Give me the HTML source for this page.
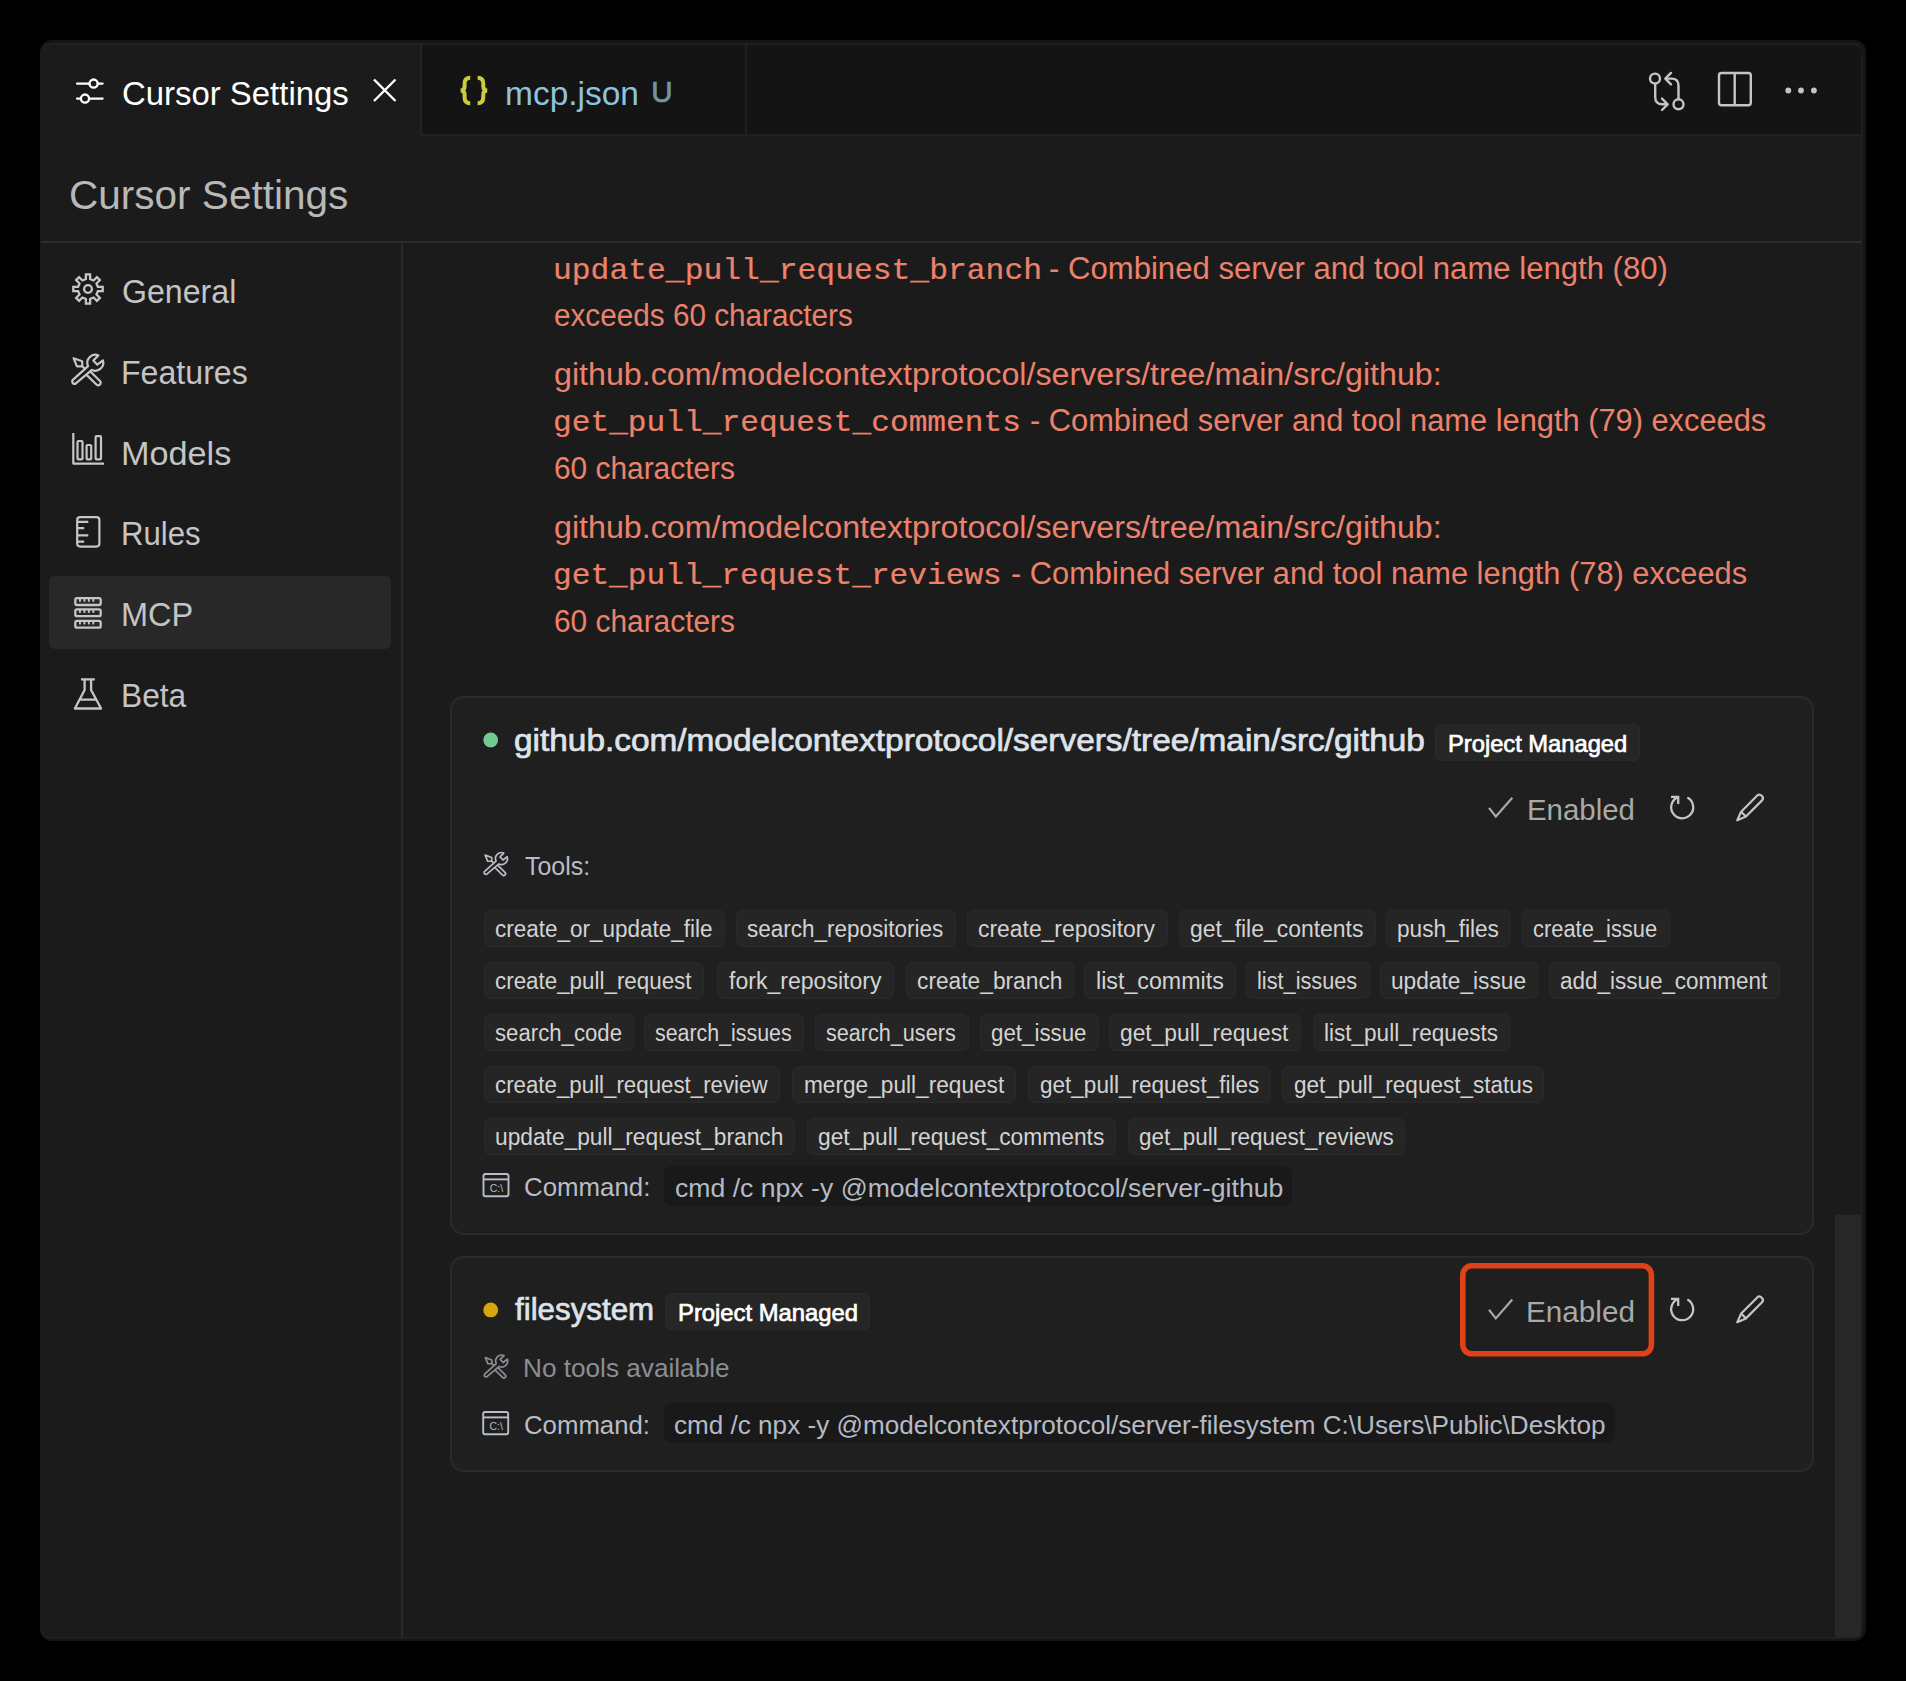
<!DOCTYPE html><html><head><meta charset="utf-8"><title>Cursor Settings</title><style>
html,body{margin:0;padding:0;background:#000;width:1906px;height:1681px;overflow:hidden}
.a{position:absolute;box-sizing:border-box}
.t{position:absolute;white-space:pre;line-height:0;transform-origin:0 0}
</style></head><body>
<div class="a" style="left:40px;top:40px;width:1826px;height:1601px;border-radius:12px;background:#151515;overflow:hidden">
<div class="a" style="left:0px;top:3px;width:1823px;height:1596px;background:#1b1b1b;border-radius:11px"></div>
<div class="a" style="left:380px;top:3px;width:1443px;height:91px;background:#141414;border-radius:0 11px 0 0"></div>
<div class="a" style="left:0px;top:3px;width:1823px;height:40px;border-top:2px solid #202020;border-radius:11px 11px 0 0"></div>
<div class="a" style="left:380px;top:5px;width:2px;height:91px;background:#232323"></div>
<div class="a" style="left:705px;top:5px;width:2px;height:89px;background:#202020"></div>
<div class="a" style="left:382px;top:94px;width:1441px;height:2px;background:#202020"></div>
<div class="a" style="left:1821px;top:14px;width:2px;height:1575px;background:#1d1d1d"></div>
<div class="a" style="left:0px;top:1559px;width:1823px;height:40px;border-bottom:2px solid #202020;border-radius:0 0 11px 11px"></div>
<div class="a" style="left:1px;top:201px;width:1821px;height:2px;background:#2b2b2b"></div>
<div class="a" style="left:361px;top:203px;width:2px;height:1394px;background:#292929"></div>
<div class="a" style="left:9px;top:536px;width:342px;height:73px;background:#282828;border-radius:6px"></div>
<div class="a" style="left:1795px;top:1175px;width:26px;height:422px;background:#272727"></div>
</div>
<div class="a" style="left:450px;top:696px;width:1364px;height:539px;background:#1f1f1f;border:2px solid #2a2a2a;border-radius:14px"></div>
<div class="a" style="left:450px;top:1256px;width:1364px;height:216px;background:#1f1f1f;border:2px solid #2a2a2a;border-radius:14px"></div>
<div class="a" style="left:1435px;top:724px;width:205px;height:37px;background:#262626;border:1px solid #2a2a2a;border-radius:6px"></div>
<div class="a" style="left:665px;top:1293px;width:205px;height:37px;background:#262626;border:1px solid #2a2a2a;border-radius:6px"></div>
<div class="a" style="left:483.5px;top:909.6px;width:241.0px;height:37px;background:#252525;border:1px solid #292929;border-radius:6px"></div>
<div class="a" style="left:735.5px;top:909.6px;width:220.0px;height:37px;background:#252525;border:1px solid #292929;border-radius:6px"></div>
<div class="a" style="left:967.0px;top:909.6px;width:201.0px;height:37px;background:#252525;border:1px solid #292929;border-radius:6px"></div>
<div class="a" style="left:1179.0px;top:909.6px;width:196.5px;height:37px;background:#252525;border:1px solid #292929;border-radius:6px"></div>
<div class="a" style="left:1386.0px;top:909.6px;width:124.8px;height:37px;background:#252525;border:1px solid #292929;border-radius:6px"></div>
<div class="a" style="left:1522.0px;top:909.6px;width:147.7px;height:37px;background:#252525;border:1px solid #292929;border-radius:6px"></div>
<div class="a" style="left:483.5px;top:961.6px;width:220.8px;height:37px;background:#252525;border:1px solid #292929;border-radius:6px"></div>
<div class="a" style="left:716.6px;top:961.6px;width:177.8px;height:37px;background:#252525;border:1px solid #292929;border-radius:6px"></div>
<div class="a" style="left:906.0px;top:961.6px;width:168.0px;height:37px;background:#252525;border:1px solid #292929;border-radius:6px"></div>
<div class="a" style="left:1084.4px;top:961.6px;width:151.2px;height:37px;background:#252525;border:1px solid #292929;border-radius:6px"></div>
<div class="a" style="left:1246.0px;top:961.6px;width:123.6px;height:37px;background:#252525;border:1px solid #292929;border-radius:6px"></div>
<div class="a" style="left:1380.0px;top:961.6px;width:158.0px;height:37px;background:#252525;border:1px solid #292929;border-radius:6px"></div>
<div class="a" style="left:1549.2px;top:961.6px;width:231.1px;height:37px;background:#252525;border:1px solid #292929;border-radius:6px"></div>
<div class="a" style="left:483.5px;top:1013.7px;width:150.2px;height:37px;background:#252525;border:1px solid #292929;border-radius:6px"></div>
<div class="a" style="left:644.0px;top:1013.7px;width:160.2px;height:37px;background:#252525;border:1px solid #292929;border-radius:6px"></div>
<div class="a" style="left:815.2px;top:1013.7px;width:153.4px;height:37px;background:#252525;border:1px solid #292929;border-radius:6px"></div>
<div class="a" style="left:979.9px;top:1013.7px;width:118.7px;height:37px;background:#252525;border:1px solid #292929;border-radius:6px"></div>
<div class="a" style="left:1109.2px;top:1013.7px;width:192.3px;height:37px;background:#252525;border:1px solid #292929;border-radius:6px"></div>
<div class="a" style="left:1313.2px;top:1013.7px;width:197.3px;height:37px;background:#252525;border:1px solid #292929;border-radius:6px"></div>
<div class="a" style="left:483.5px;top:1065.8px;width:296.9px;height:37px;background:#252525;border:1px solid #292929;border-radius:6px"></div>
<div class="a" style="left:792.3px;top:1065.8px;width:224.2px;height:37px;background:#252525;border:1px solid #292929;border-radius:6px"></div>
<div class="a" style="left:1028.3px;top:1065.8px;width:242.4px;height:37px;background:#252525;border:1px solid #292929;border-radius:6px"></div>
<div class="a" style="left:1282.3px;top:1065.8px;width:262.2px;height:37px;background:#252525;border:1px solid #292929;border-radius:6px"></div>
<div class="a" style="left:483.5px;top:1117.8px;width:311.2px;height:37px;background:#252525;border:1px solid #292929;border-radius:6px"></div>
<div class="a" style="left:806.6px;top:1117.8px;width:309.8px;height:37px;background:#252525;border:1px solid #292929;border-radius:6px"></div>
<div class="a" style="left:1127.5px;top:1117.8px;width:277.9px;height:37px;background:#252525;border:1px solid #292929;border-radius:6px"></div>
<div class="a" style="left:664px;top:1166px;width:628px;height:40px;background:#191919;border-radius:8px"></div>
<div class="a" style="left:664px;top:1403px;width:951px;height:40px;background:#191919;border-radius:8px"></div>
<div class="t" style="left:121.53px;top:93.40px;font-family:'Liberation Sans',sans-serif;font-weight:400;font-size:34px;color:#ffffff;transform:scaleX(0.9677)">Cursor Settings</div>
<div class="t" style="left:505.03px;top:93.30px;font-family:'Liberation Sans',sans-serif;font-weight:400;font-size:34px;color:#8cc4de;transform:scaleX(0.9848)">mcp.json</div>
<div class="t" style="left:651.20px;top:92.38px;font-family:'Liberation Sans',sans-serif;font-weight:400;-webkit-text-stroke:0.7px #6e96a5;font-size:29.5px;color:#6e96a5;transform:scaleX(1.0000)">U</div>
<div class="t" style="left:69.02px;top:194.85px;font-family:'Liberation Sans',sans-serif;font-weight:400;font-size:41px;color:#b8b8b8;transform:scaleX(0.9885)">Cursor Settings</div>
<div class="t" style="left:121.76px;top:291.30px;font-family:'Liberation Sans',sans-serif;font-weight:400;font-size:34px;color:#c4c4c4;transform:scaleX(0.9449)">General</div>
<div class="t" style="left:120.67px;top:372.10px;font-family:'Liberation Sans',sans-serif;font-weight:400;font-size:34px;color:#c4c4c4;transform:scaleX(0.9446)">Features</div>
<div class="t" style="left:120.78px;top:453.20px;font-family:'Liberation Sans',sans-serif;font-weight:400;font-size:34px;color:#c4c4c4;transform:scaleX(1.0066)">Models</div>
<div class="t" style="left:121.25px;top:533.10px;font-family:'Liberation Sans',sans-serif;font-weight:400;font-size:34px;color:#c4c4c4;transform:scaleX(0.9157)">Rules</div>
<div class="t" style="left:120.63px;top:614.40px;font-family:'Liberation Sans',sans-serif;font-weight:400;font-size:34px;color:#c4c4c4;transform:scaleX(0.9563)">MCP</div>
<div class="t" style="left:120.70px;top:695.10px;font-family:'Liberation Sans',sans-serif;font-weight:400;font-size:34px;color:#c4c4c4;transform:scaleX(0.9328)">Beta</div>
<div class="t" style="left:552.54px;top:272.26px;font-family:'Liberation Mono',monospace;font-weight:400;-webkit-text-stroke:0.22px #ec826c;font-size:29px;color:#ec826c;transform:scaleX(1.0808)">update_pull_request_branch</div>
<div class="t" style="left:1049.00px;top:268.95px;font-family:'Liberation Sans',sans-serif;font-weight:400;font-size:31px;color:#ec826c;transform:scaleX(1.0033)">- Combined server and tool name length (80)</div>
<div class="t" style="left:553.74px;top:315.95px;font-family:'Liberation Sans',sans-serif;font-weight:400;font-size:31px;color:#ec826c;transform:scaleX(0.9581)">exceeds 60 characters</div>
<div class="t" style="left:553.66px;top:374.65px;font-family:'Liberation Sans',sans-serif;font-weight:400;font-size:31px;color:#ec826c;transform:scaleX(1.0387)">github.com/modelcontextprotocol/servers/tree/main/src/github:</div>
<div class="t" style="left:552.55px;top:423.96px;font-family:'Liberation Mono',monospace;font-weight:400;-webkit-text-stroke:0.22px #ec826c;font-size:29px;color:#ec826c;transform:scaleX(1.0756)">get_pull_request_comments</div>
<div class="t" style="left:1029.51px;top:420.65px;font-family:'Liberation Sans',sans-serif;font-weight:400;font-size:31px;color:#ec826c;transform:scaleX(0.9936)">- Combined server and tool name length (79) exceeds</div>
<div class="t" style="left:553.74px;top:468.65px;font-family:'Liberation Sans',sans-serif;font-weight:400;font-size:31px;color:#ec826c;transform:scaleX(0.9634)">60 characters</div>
<div class="t" style="left:553.66px;top:527.55px;font-family:'Liberation Sans',sans-serif;font-weight:400;font-size:31px;color:#ec826c;transform:scaleX(1.0387)">github.com/modelcontextprotocol/servers/tree/main/src/github:</div>
<div class="t" style="left:552.55px;top:576.96px;font-family:'Liberation Mono',monospace;font-weight:400;-webkit-text-stroke:0.22px #ec826c;font-size:29px;color:#ec826c;transform:scaleX(1.0746)">get_pull_request_reviews</div>
<div class="t" style="left:1011.01px;top:573.65px;font-family:'Liberation Sans',sans-serif;font-weight:400;font-size:31px;color:#ec826c;transform:scaleX(0.9934)">- Combined server and tool name length (78) exceeds</div>
<div class="t" style="left:553.74px;top:621.55px;font-family:'Liberation Sans',sans-serif;font-weight:400;font-size:31px;color:#ec826c;transform:scaleX(0.9634)">60 characters</div>
<div class="t" style="left:513.92px;top:740.95px;font-family:'Liberation Sans',sans-serif;font-weight:400;-webkit-text-stroke:0.7px #dee2ea;font-size:31px;color:#dee2ea;transform:scaleX(1.0767)">github.com/modelcontextprotocol/servers/tree/main/src/github</div>
<div class="t" style="left:1448.01px;top:743.70px;font-family:'Liberation Sans',sans-serif;font-weight:400;-webkit-text-stroke:0.7px #ffffff;font-size:24px;color:#ffffff;transform:scaleX(0.9878)">Project Managed</div>
<div class="t" style="left:1526.84px;top:810.10px;font-family:'Liberation Sans',sans-serif;font-weight:400;font-size:30px;color:#a9a9a9;transform:scaleX(0.9804)">Enabled</div>
<div class="t" style="left:525.00px;top:865.52px;font-family:'Liberation Sans',sans-serif;font-weight:400;font-size:26.5px;color:#b9bdc6;transform:scaleX(0.9403)">Tools:</div>
<div class="t" style="left:523.63px;top:1187.02px;font-family:'Liberation Sans',sans-serif;font-weight:400;font-size:26.5px;color:#b9bdc6;transform:scaleX(0.9748)">Command:</div>
<div class="t" style="left:674.68px;top:1188.00px;font-family:'Liberation Sans',sans-serif;font-weight:400;font-size:26px;color:#b5bac5;transform:scaleX(1.0236)">cmd /c npx -y @modelcontextprotocol/server-github</div>
<div class="t" style="left:515.30px;top:1310.05px;font-family:'Liberation Sans',sans-serif;font-weight:400;-webkit-text-stroke:0.7px #dee2ea;font-size:31px;color:#dee2ea;transform:scaleX(1.0095)">filesystem</div>
<div class="t" style="left:678.01px;top:1312.60px;font-family:'Liberation Sans',sans-serif;font-weight:400;-webkit-text-stroke:0.7px #ffffff;font-size:24px;color:#ffffff;transform:scaleX(0.9922)">Project Managed</div>
<div class="t" style="left:1526.42px;top:1312.30px;font-family:'Liberation Sans',sans-serif;font-weight:400;font-size:30px;color:#a9a9a9;transform:scaleX(0.9897)">Enabled</div>
<div class="t" style="left:523.03px;top:1368.32px;font-family:'Liberation Sans',sans-serif;font-weight:400;font-size:26.5px;color:#8b8e94;transform:scaleX(0.9874)">No tools available</div>
<div class="t" style="left:523.53px;top:1424.52px;font-family:'Liberation Sans',sans-serif;font-weight:400;font-size:26.5px;color:#b9bdc6;transform:scaleX(0.9724)">Command:</div>
<div class="t" style="left:674.30px;top:1425.40px;font-family:'Liberation Sans',sans-serif;font-weight:400;font-size:26px;color:#b5bac5;transform:scaleX(1.0038)">cmd /c npx -y @modelcontextprotocol/server-filesystem C:\Users\Public\Desktop</div>
<div class="t" style="left:494.74px;top:928.98px;font-family:'Liberation Sans',sans-serif;font-weight:400;font-size:23.5px;color:#d3d3d3;transform:scaleX(0.9571)">create_or_update_file</div>
<div class="t" style="left:746.74px;top:928.98px;font-family:'Liberation Sans',sans-serif;font-weight:400;font-size:23.5px;color:#d3d3d3;transform:scaleX(0.9574)">search_repositories</div>
<div class="t" style="left:978.23px;top:928.98px;font-family:'Liberation Sans',sans-serif;font-weight:400;font-size:23.5px;color:#d3d3d3;transform:scaleX(0.9740)">create_repository</div>
<div class="t" style="left:1190.22px;top:928.98px;font-family:'Liberation Sans',sans-serif;font-weight:400;font-size:23.5px;color:#d3d3d3;transform:scaleX(0.9761)">get_file_contents</div>
<div class="t" style="left:1397.24px;top:928.98px;font-family:'Liberation Sans',sans-serif;font-weight:400;font-size:23.5px;color:#d3d3d3;transform:scaleX(0.9625)">push_files</div>
<div class="t" style="left:1533.27px;top:928.98px;font-family:'Liberation Sans',sans-serif;font-weight:400;font-size:23.5px;color:#d3d3d3;transform:scaleX(0.9318)">create_issue</div>
<div class="t" style="left:494.75px;top:981.02px;font-family:'Liberation Sans',sans-serif;font-weight:400;font-size:23.5px;color:#d3d3d3;transform:scaleX(0.9519)">create_pull_request</div>
<div class="t" style="left:728.80px;top:981.02px;font-family:'Liberation Sans',sans-serif;font-weight:400;font-size:23.5px;color:#d3d3d3;transform:scaleX(0.9814)">fork_repository</div>
<div class="t" style="left:917.23px;top:981.02px;font-family:'Liberation Sans',sans-serif;font-weight:400;font-size:23.5px;color:#d3d3d3;transform:scaleX(0.9682)">create_branch</div>
<div class="t" style="left:1095.61px;top:981.02px;font-family:'Liberation Sans',sans-serif;font-weight:400;font-size:23.5px;color:#d3d3d3;transform:scaleX(0.9883)">list_commits</div>
<div class="t" style="left:1257.28px;top:981.02px;font-family:'Liberation Sans',sans-serif;font-weight:400;font-size:23.5px;color:#d3d3d3;transform:scaleX(0.9243)">list_issues</div>
<div class="t" style="left:1391.23px;top:981.02px;font-family:'Liberation Sans',sans-serif;font-weight:400;font-size:23.5px;color:#d3d3d3;transform:scaleX(0.9659)">update_issue</div>
<div class="t" style="left:1560.44px;top:981.02px;font-family:'Liberation Sans',sans-serif;font-weight:400;font-size:23.5px;color:#d3d3d3;transform:scaleX(0.9556)">add_issue_comment</div>
<div class="t" style="left:494.76px;top:1033.08px;font-family:'Liberation Sans',sans-serif;font-weight:400;font-size:23.5px;color:#d3d3d3;transform:scaleX(0.9436)">search_code</div>
<div class="t" style="left:655.29px;top:1033.08px;font-family:'Liberation Sans',sans-serif;font-weight:400;font-size:23.5px;color:#d3d3d3;transform:scaleX(0.9094)">search_issues</div>
<div class="t" style="left:826.48px;top:1033.08px;font-family:'Liberation Sans',sans-serif;font-weight:400;font-size:23.5px;color:#d3d3d3;transform:scaleX(0.9193)">search_users</div>
<div class="t" style="left:991.15px;top:1033.08px;font-family:'Liberation Sans',sans-serif;font-weight:400;font-size:23.5px;color:#d3d3d3;transform:scaleX(0.9495)">get_issue</div>
<div class="t" style="left:1120.43px;top:1033.08px;font-family:'Liberation Sans',sans-serif;font-weight:400;font-size:23.5px;color:#d3d3d3;transform:scaleX(0.9688)">get_pull_request</div>
<div class="t" style="left:1324.44px;top:1033.08px;font-family:'Liberation Sans',sans-serif;font-weight:400;font-size:23.5px;color:#d3d3d3;transform:scaleX(0.9589)">list_pull_requests</div>
<div class="t" style="left:494.75px;top:1085.12px;font-family:'Liberation Sans',sans-serif;font-weight:400;font-size:23.5px;color:#d3d3d3;transform:scaleX(0.9484)">create_pull_request_review</div>
<div class="t" style="left:803.54px;top:1085.12px;font-family:'Liberation Sans',sans-serif;font-weight:400;font-size:23.5px;color:#d3d3d3;transform:scaleX(0.9638)">merge_pull_request</div>
<div class="t" style="left:1039.54px;top:1085.12px;font-family:'Liberation Sans',sans-serif;font-weight:400;font-size:23.5px;color:#d3d3d3;transform:scaleX(0.9590)">get_pull_request_files</div>
<div class="t" style="left:1293.54px;top:1085.12px;font-family:'Liberation Sans',sans-serif;font-weight:400;font-size:23.5px;color:#d3d3d3;transform:scaleX(0.9577)">get_pull_request_status</div>
<div class="t" style="left:494.73px;top:1137.17px;font-family:'Liberation Sans',sans-serif;font-weight:400;font-size:23.5px;color:#d3d3d3;transform:scaleX(0.9679)">update_pull_request_branch</div>
<div class="t" style="left:817.83px;top:1137.17px;font-family:'Liberation Sans',sans-serif;font-weight:400;font-size:23.5px;color:#d3d3d3;transform:scaleX(0.9697)">get_pull_request_comments</div>
<div class="t" style="left:1138.74px;top:1137.17px;font-family:'Liberation Sans',sans-serif;font-weight:400;font-size:23.5px;color:#d3d3d3;transform:scaleX(0.9555)">get_pull_request_reviews</div>
<svg class="a" style="left:0;top:0" width="1906" height="1681" viewBox="0 0 1906 1681"><g stroke="#ffffff" stroke-width="2.3" fill="none" stroke-linecap="round"><path d="M77,83.6 H89.3 M97.9,83.6 H102.6 M77,98.6 H80.7 M89.3,98.6 H102.6"/><circle cx="93.6" cy="83.6" r="4.1"/><circle cx="85" cy="98.6" r="4.1"/></g><path d="M374,79.5 L395.5,101 M395.5,79.5 L374,101" stroke="#ffffff" stroke-width="2.4" fill="none"/><g stroke="#c5c5c5" stroke-width="2.4" fill="none" stroke-linejoin="round" stroke-linecap="round"><circle cx="1655" cy="78.6" r="5"/><circle cx="1678.5" cy="104.3" r="5"/><path d="M1655.2,83.6 V97 Q1655.2,104.3 1662.5,104.3 H1667"/><path d="M1662,98.6 L1667.7,104.3 L1662,110"/><path d="M1678.5,99.3 V85.6 Q1678.5,78.6 1671.5,78.6 H1666"/><path d="M1671,72.9 L1665.3,78.6 L1671,84.3"/></g><g stroke="#c5c5c5" stroke-width="2.4" fill="none"><rect x="1719" y="73" width="31.8" height="32.3" rx="2.5"/><path d="M1734.7,73 V105.3"/></g><g fill="#c5c5c5"><circle cx="1788.3" cy="90.5" r="2.9"/><circle cx="1801" cy="90.5" r="2.9"/><circle cx="1813.9" cy="90.5" r="2.9"/></g><path d="M85.90,279.10 L85.90,274.30 L90.10,274.30 L90.10,279.10 L93.52,280.51 L96.91,277.12 L99.88,280.09 L96.49,283.48 L97.90,286.90 L102.70,286.90 L102.70,291.10 L97.90,291.10 L96.49,294.52 L99.88,297.91 L96.91,300.88 L93.52,297.49 L90.10,298.90 L90.10,303.70 L85.90,303.70 L85.90,298.90 L82.48,297.49 L79.09,300.88 L76.12,297.91 L79.51,294.52 L78.10,291.10 L73.30,291.10 L73.30,286.90 L78.10,286.90 L79.51,283.48 L76.12,280.09 L79.09,277.12 L82.48,280.51 Z" fill="none" stroke="#c6c6c6" stroke-width="2.3" stroke-linejoin="miter"/><circle cx="88" cy="289" r="3.9" fill="none" stroke="#c6c6c6" stroke-width="2.3"/><g transform="translate(72,354) scale(1.0)" fill="none" stroke="#c6c6c6" stroke-width="2.200" stroke-linejoin="round" stroke-linecap="round"><path d="M1.6,4.2 L10.2,7.3 L10.3,12.2 L4.9,12.3 Z M10.3,12.2 L12.3,14.2"/><path d="M0.87,25.87 L16.05,12.08 A8,8 0 0 1 26.4,1.4 L21.3,6.5 L25.3,10.7 L30.9,6.3 A8,8 0 0 1 19.92,15.95 L4.13,29.13 A2.3,2.3 0 0 1 0.87,25.87 Z"/><path d="M18.6,17.8 L27.97,27.03 A2.5,2.5 0 0 1 24.43,30.57 L15.3,21.6"/></g><g stroke="#c6c6c6" stroke-width="2.2" fill="none" stroke-linejoin="round"><path d="M73.3,433 V463.6 H104"/><rect x="77.5" y="441" width="5" height="18.4" rx="1"/><rect x="86.6" y="445" width="4.6" height="14.4" rx="1"/><rect x="95.6" y="436.2" width="5.4" height="23.2" rx="1"/></g><g stroke="#c6c6c6" stroke-width="2.2" fill="none" stroke-linejoin="round"><rect x="77.2" y="517.2" width="22.2" height="29.4" rx="3"/><path d="M77.2,521.8 H88.3 M77.2,528.1 H84.2 M77.2,535.3 H88.3 M77.2,541.7 H84.2"/></g><rect x="75.3" y="598.1" width="25.4" height="6.9" rx="1.8" stroke="#c6c6c6" stroke-width="2.3" fill="none"/><g fill="#c6c6c6"><rect x="79.00" y="598.1" width="1.9" height="3.6"/><rect x="83.45" y="598.1" width="1.9" height="3.6"/><rect x="87.90" y="598.1" width="1.9" height="3.6"/><rect x="92.35" y="598.1" width="1.9" height="3.6"/></g><rect x="75.3" y="609.3" width="25.4" height="6.9" rx="1.8" stroke="#c6c6c6" stroke-width="2.3" fill="none"/><g fill="#c6c6c6"><rect x="79.00" y="609.3" width="1.9" height="3.6"/><rect x="83.45" y="609.3" width="1.9" height="3.6"/><rect x="87.90" y="609.3" width="1.9" height="3.6"/><rect x="92.35" y="609.3" width="1.9" height="3.6"/></g><rect x="75.3" y="620.8" width="25.4" height="6.9" rx="1.8" stroke="#c6c6c6" stroke-width="2.3" fill="none"/><g fill="#c6c6c6"><rect x="79.00" y="620.8" width="1.9" height="3.6"/><rect x="83.45" y="620.8" width="1.9" height="3.6"/><rect x="87.90" y="620.8" width="1.9" height="3.6"/><rect x="92.35" y="620.8" width="1.9" height="3.6"/></g><g stroke="#c6c6c6" stroke-width="2.3" fill="none" stroke-linejoin="round"><path d="M81,679.4 H94.8 M84.6,679.4 V690 L74.9,708.5 H101.1 L91.1,690 V679.4 M79.7,699.6 H96.4"/></g><circle cx="490.7" cy="740" r="7.4" fill="#73ca93"/><circle cx="490.7" cy="1309.9" r="7.4" fill="#d5a70c"/><path d="M1489,807.9 L1495.8,816.5 L1512.3,797.7" stroke="#a9a9a9" stroke-width="2.2" fill="none"/><path d="M1687.36,797.59 A11,11 0 1 1 1678.08,797.10" stroke="#c5c5c5" stroke-width="2.3" fill="none"/><path d="M1671,796.9 H1678.2 V804" stroke="#c5c5c5" stroke-width="2.3" fill="none"/><g transform="translate(1737.3,820.3) rotate(-45)" stroke="#c5c5c5" stroke-width="2.2" fill="none" stroke-linejoin="round"><path d="M0,0 L8.8,-3.4 H31.6 Q34.6,-3.4 34.6,0 Q34.6,3.4 31.6,3.4 H8.8 Z M8.8,-3.4 V3.4"/></g><path d="M1489,1309.8 L1495.8,1318.4 L1512.3,1299.6" stroke="#a9a9a9" stroke-width="2.2" fill="none"/><path d="M1687.36,1299.49 A11,11 0 1 1 1678.08,1299.00" stroke="#c5c5c5" stroke-width="2.3" fill="none"/><path d="M1671,1298.8 H1678.2 V1305.9" stroke="#c5c5c5" stroke-width="2.3" fill="none"/><g transform="translate(1737.3,1322.1999999999998) rotate(-45)" stroke="#c5c5c5" stroke-width="2.2" fill="none" stroke-linejoin="round"><path d="M0,0 L8.8,-3.4 H31.6 Q34.6,-3.4 34.6,0 Q34.6,3.4 31.6,3.4 H8.8 Z M8.8,-3.4 V3.4"/></g><g transform="translate(484,852) scale(0.75)" fill="none" stroke="#b9bdc6" stroke-width="2.267" stroke-linejoin="round" stroke-linecap="round"><path d="M1.6,4.2 L10.2,7.3 L10.3,12.2 L4.9,12.3 Z M10.3,12.2 L12.3,14.2"/><path d="M0.87,25.87 L16.05,12.08 A8,8 0 0 1 26.4,1.4 L21.3,6.5 L25.3,10.7 L30.9,6.3 A8,8 0 0 1 19.92,15.95 L4.13,29.13 A2.3,2.3 0 0 1 0.87,25.87 Z"/><path d="M18.6,17.8 L27.97,27.03 A2.5,2.5 0 0 1 24.43,30.57 L15.3,21.6"/></g><g transform="translate(484.2,1354.5) scale(0.75)" fill="none" stroke="#8b8e94" stroke-width="2.267" stroke-linejoin="round" stroke-linecap="round"><path d="M1.6,4.2 L10.2,7.3 L10.3,12.2 L4.9,12.3 Z M10.3,12.2 L12.3,14.2"/><path d="M0.87,25.87 L16.05,12.08 A8,8 0 0 1 26.4,1.4 L21.3,6.5 L25.3,10.7 L30.9,6.3 A8,8 0 0 1 19.92,15.95 L4.13,29.13 A2.3,2.3 0 0 1 0.87,25.87 Z"/><path d="M18.6,17.8 L27.97,27.03 A2.5,2.5 0 0 1 24.43,30.57 L15.3,21.6"/></g><g stroke="#b9bdc6" stroke-width="1.9" fill="none"><rect x="483.5" y="1174" width="25" height="22.2" rx="2"/><path d="M483.5,1179.4 H508.5"/></g><text x="489.7" y="1191.6" font-family="Liberation Sans" font-size="10.5" fill="#b9bdc6">C:\</text><g stroke="#b9bdc6" stroke-width="1.9" fill="none"><rect x="483.2" y="1412" width="25" height="22.2" rx="2"/><path d="M483.2,1417.4 H508.2"/></g><text x="489.4" y="1429.6" font-family="Liberation Sans" font-size="10.5" fill="#b9bdc6">C:\</text><rect x="1462.8" y="1265.8" width="188.6" height="88" rx="9" stroke="#df4118" stroke-width="5.6" fill="none"/></svg>
<svg class="a" style="left:0;top:0" width="600" height="140"><g stroke="#cbcb41" stroke-width="4" fill="none"><path d="M470.2,77.8 Q464.6,77.8 464.6,83.5 V86.5 Q464.6,90.5 460.6,90.5 Q464.6,90.5 464.6,94.5 V97.5 Q464.6,103.2 470.2,103.2"/><path d="M477.65,77.8 Q483.25,77.8 483.25,83.5 V86.5 Q483.25,90.5 487.25,90.5 Q483.25,90.5 483.25,94.5 V97.5 Q483.25,103.2 477.65,103.2"/></g></svg>
</body></html>
